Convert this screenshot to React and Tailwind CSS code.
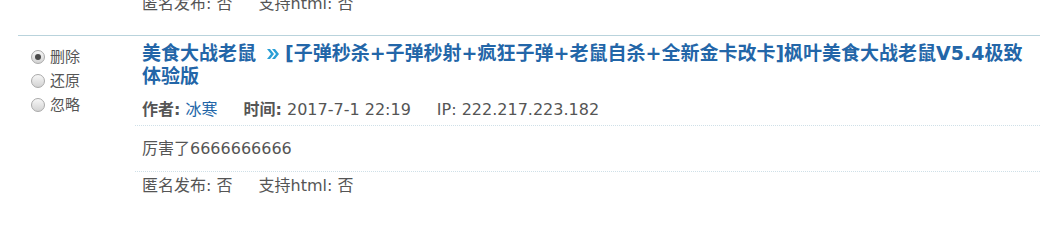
const Radio = ({ checked, label }) => {
  return (
    <label className="flex items-center h-[24px] gap-[5px] cursor-pointer">
      <span className="w-[14px] h-[14px] rounded-full border border-[#a9a9a9] bg-gradient-to-b from-[#f7f7f7] to-[#d3d3d3] flex items-center justify-center">
        {checked && <span className="w-[6px] h-[6px] rounded-full bg-[#4a4a4a]" />}
      </span>
      <span>{label}</span>
    </label>
  );
};

const FooterRow = ({ pad }) => {
  return (
    <div className={`px-[7px] leading-[20px] ${pad}`}>
      匿名发布: 否<span className="inline-block w-[26px]" />支持html: 否
    </div>
  );
};

const Chevrons = () => (
  <svg width="12" height="10" viewBox="0 0 12 10" className="inline-block align-[1px] ml-[11px] mr-[6px]">
    <path d="M0 0h3l4 5-4 5H0l4-5z" fill="#2a9fd6" />
    <path d="M5 0h3l4 5-4 5H5l4-5z" fill="#2a9fd6" />
  </svg>
);

export default function App() {
  return (
    <div className="w-[1050px] h-[207px] overflow-hidden bg-white text-[16px] text-[#555] font-['DejaVu_Sans','Noto_Sans_CJK_SC',sans-serif]">
      <div className="-mt-[10px] ml-[18px] mr-[10px]">

        {/* tail of previous reply */}
        <div className="flex">
          <div className="w-[117px] shrink-0" />
          <div className="flex-1">
            <FooterRow pad="pt-[4px] pb-[21px]" />
          </div>
        </div>

        {/* reply */}
        <div className="flex border-t border-[#b9d3dc]">
          <div className="w-[117px] shrink-0 pl-[13px] pt-[9px] text-[15px]">
            <Radio checked label="删除" />
            <Radio label="还原" />
            <Radio label="忽略" />
          </div>

          <div className="flex-1">
            <h3 className="px-[7px] pt-[6px] leading-[23px] text-[19px] font-bold text-[#2366a8]">
              <a href="#">美食大战老鼠</a>
              <Chevrons />
              <a href="#">[子弹秒杀+子弹秒射+疯狂子弹+老鼠自杀+全新金卡改卡]枫叶美食大战老鼠V5.4极致体验版</a>
            </h3>

            <div className="px-[7px] pt-[12px] pb-[5px] leading-[20px] border-b border-dotted border-[#cfe0e8]">
              <b>作者:</b> <a href="#" className="text-[#2366a8]">冰寒</a>
              <span className="inline-block w-[26px]" />
              <b>时间:</b> 2017-7-1 22:19
              <span className="inline-block w-[26px]" />
              IP: 222.217.223.182
            </div>

            <div className="px-[7px] pt-[13px] pb-[12px] leading-[20px] border-b border-dotted border-[#cfe0e8]">
              厉害了6666666666
            </div>

            <FooterRow pad="pt-[4px] pb-[21px]" />
          </div>
        </div>
      </div>
    </div>
  );
}
